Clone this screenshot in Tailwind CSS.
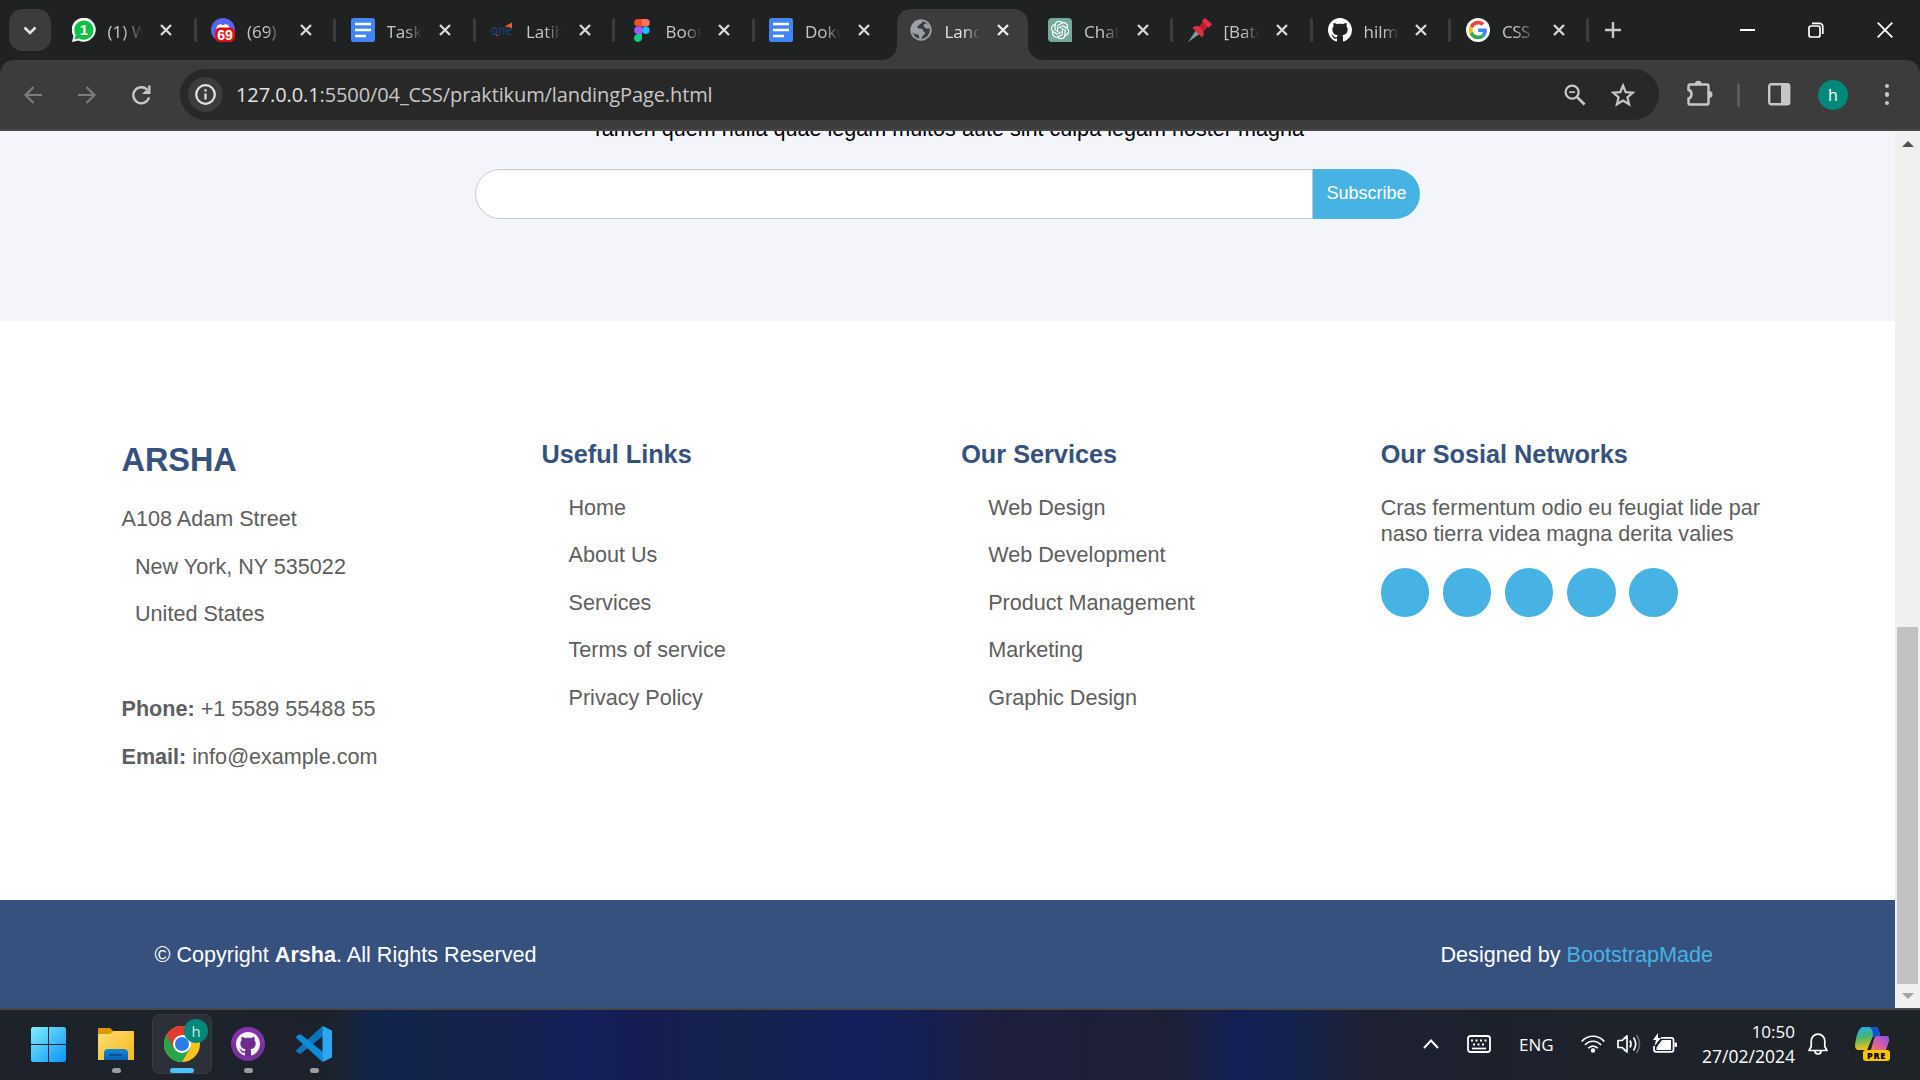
<!DOCTYPE html>
<html lang="en">
<head>
<meta charset="utf-8">
<title>Landing Page</title>
<script src="https://cdn.jsdelivr.net/npm/@tailwindcss/browser@4"></script>
</head>
<body class="w-[1920px] h-[1080px] overflow-hidden bg-[#202221] font-['Open_Sans',sans-serif]">
<svg class="hidden">
  <symbol id="x" viewBox="0 0 12 12"><path d="M1 1l10 10M11 1L1 11" stroke="currentColor" stroke-width="2.3" fill="none"/></symbol>
  <symbol id="doc" viewBox="0 0 24 24"><rect width="24" height="24" rx="2.5" fill="#4285f4"/><path d="M4 6h16M4 12h16M4 18h11" stroke="#fff" stroke-width="2.4"/></symbol>
  <symbol id="gh" viewBox="0 0 16 16"><path fill="currentColor" d="M8 0C3.58 0 0 3.58 0 8c0 3.54 2.29 6.53 5.47 7.59.4.07.55-.17.55-.38 0-.19-.01-.82-.01-1.49-2.01.37-2.53-.49-2.69-.94-.09-.23-.48-.94-.82-1.13-.28-.15-.68-.52-.01-.53.63-.01 1.08.58 1.23.82.72 1.21 1.87.87 2.33.66.07-.52.28-.87.51-1.07-1.78-.2-3.64-.89-3.64-3.95 0-.87.31-1.59.82-2.15-.08-.2-.36-1.02.08-2.12 0 0 .67-.21 2.2.82.64-.18 1.32-.27 2-.27s1.36.09 2 .27c1.53-1.04 2.2-.82 2.2-.82.44 1.1.16 1.92.08 2.12.51.56.82 1.27.82 2.15 0 3.07-1.87 3.75-3.65 3.95.29.25.54.73.54 1.48 0 1.07-.01 1.93-.01 2.2 0 .21.15.46.55.38A8.01 8.01 0 0 0 16 8c0-4.42-3.58-8-8-8z"/></symbol>
</svg>
<div class="flex flex-col h-full">
  <!-- tab strip -->
  <div class="flex h-[60px] items-center shrink-0 text-[17px] leading-6 text-[#c7c7c7]">
    <div class="ml-[9px] mr-[3px] size-[42px] rounded-[14px] bg-[#3c3c3c] flex items-center justify-center shrink-0">
      <svg class="w-[14px] h-[9px]" viewBox="0 0 14 9"><path d="M1.5 1.5L7 7l5.500-5.500" stroke="#e3e3e3" stroke-width="2.6" fill="none"/></svg>
    </div>
    <div class="flex items-center w-[139.5px] shrink-0">
      <svg class="ml-[17.500px] size-6 shrink-0" viewBox="0 0 24 24"><path d="M0 24l1.500-6A12 12 0 1 1 6.500 22.500z" fill="#fff"/><path d="M2.300 21.500l1.300-4.500A9.600 9.600 0 1 1 7 20.400z" fill="#0fc143"/><text x="12" y="17" text-anchor="middle" font-family="Liberation Sans" font-weight="700" font-size="15" fill="#fff">1</text></svg>
      <span class="ml-3 mt-[3px] w-[35px] overflow-hidden whitespace-nowrap [mask-image:linear-gradient(90deg,#000_45%,transparent)]">(1) WhatsApp</span>
      <svg class="ml-[17.500px] size-3 text-[#dadada]"><use href="#x"/></svg>
    </div>
    <div class="flex items-center w-[139.5px] shrink-0"><i class="w-[3px] h-6 rounded bg-[#3c3c3c]"></i>
      <svg class="ml-[14.500px] size-6 shrink-0" viewBox="0 0 24 24"><circle cx="12" cy="12" r="12" fill="#5865f2"/><path d="M5 13c0-3 1-5 2-6l3-1 1 1h2l1-1 3 1c1 1 2 3 2 6z" fill="#fff"/><rect x="4" y="9.500" width="20" height="14.500" rx="5" fill="#e0120f"/><text x="14" y="21.700" text-anchor="middle" font-family="Liberation Sans" font-weight="700" font-size="14" fill="#fff">69</text></svg>
      <span class="ml-3 mt-[3px] w-[35px] overflow-hidden whitespace-nowrap [mask-image:linear-gradient(90deg,#000_55%,transparent)]">(69)</span>
      <svg class="ml-[17.500px] size-3 text-[#dadada]"><use href="#x"/></svg>
    </div>
    <div class="flex items-center w-[139.5px] shrink-0"><i class="w-[3px] h-6 rounded bg-[#3c3c3c]"></i>
      <svg class="ml-[14.500px] size-6 shrink-0"><use href="#doc"/></svg>
      <span class="ml-3 mt-[3px] w-[35px] overflow-hidden whitespace-nowrap [mask-image:linear-gradient(90deg,#000_55%,transparent)]">Task</span>
      <svg class="ml-[17.500px] size-3 text-[#dadada]"><use href="#x"/></svg>
    </div>
    <div class="flex items-center w-[139.5px] shrink-0"><i class="w-[3px] h-6 rounded bg-[#3c3c3c]"></i>
      <svg class="ml-[14.500px] size-6 shrink-0" viewBox="0 0 24 24"><text x="1" y="17" font-family="Open Sans" font-weight="600" font-size="13.500" textLength="21" lengthAdjust="spacingAndGlyphs" fill="#1c3d77">one</text><path d="M14.500 8.500l7.500-4v6l-2.500-1.500z" fill="#e8622c"/><circle cx="7" cy="17.500" r=".8" fill="#e8622c"/></svg>
      <span class="ml-3 mt-[3px] w-[35px] overflow-hidden whitespace-nowrap [mask-image:linear-gradient(90deg,#000_55%,transparent)]">Latihan</span>
      <svg class="ml-[17.500px] size-3 text-[#dadada]"><use href="#x"/></svg>
    </div>
    <div class="flex items-center w-[139.5px] shrink-0"><i class="w-[3px] h-6 rounded bg-[#3c3c3c]"></i>
      <svg class="ml-[14.500px] size-6 shrink-0" viewBox="0 0 24 24"><path d="M12 1H8a3.700 3.700 0 0 0 0 7.500h4z" fill="#f24e1e"/><path d="M12 1h4a3.700 3.700 0 0 1 0 7.500h-4z" fill="#ff7262"/><path d="M12 8.500H8A3.700 3.700 0 0 0 8 16h4z" fill="#a259ff"/><circle cx="15.800" cy="12.300" r="3.800" fill="#1abcfe"/><path d="M12 16H8.200a4 4 0 1 0 3.800 4z" fill="#0acf83"/></svg>
      <span class="ml-3 mt-[3px] w-[35px] overflow-hidden whitespace-nowrap [mask-image:linear-gradient(90deg,#000_55%,transparent)]">Bootstrap</span>
      <svg class="ml-[17.500px] size-3 text-[#dadada]"><use href="#x"/></svg>
    </div>
    <div class="flex items-center w-[139.5px] shrink-0"><i class="w-[3px] h-6 rounded bg-[#3c3c3c]"></i>
      <svg class="ml-[14.500px] size-6 shrink-0"><use href="#doc"/></svg>
      <span class="ml-3 mt-[3px] w-[35px] overflow-hidden whitespace-nowrap [mask-image:linear-gradient(90deg,#000_55%,transparent)]">Dokumen</span>
      <svg class="ml-[17.500px] size-3 text-[#dadada]"><use href="#x"/></svg>
    </div>
    <div class="relative flex items-center w-[139.5px] h-[60px] shrink-0 text-[#e3e3e3]">
      <svg class="absolute left-[-9px] top-[9px] w-[162px] h-[51px]" viewBox="0 0 162 51"><path d="M0 51a15 15 0 0 0 15-15V14A14 14 0 0 1 29 0h103a14 14 0 0 1 14 14v22a15 15 0 0 0 15 15z" fill="#3c3c3c"/></svg>
      <svg class="relative ml-[17.500px] size-6 shrink-0" viewBox="0 0 24 24"><circle cx="12" cy="12" r="9.800" fill="none" stroke="#9aa0a6" stroke-width="1.800"/><path d="M2.500 11.500C3 6 7 2.200 13.500 2.500c.5 2-1 3.500-3 3.800-.5 1.500-1 2-2.300 2.200-.2 1.500.8 2 2.500 2 2.800.2 3.600 1.500 3.800 3 1.500.3 2 1.500 1 2.800l-2.500 2.500c-.2 1.400-.8 2.300-2.200 2.800-1-1.600-.2-3.600-1.600-5.200C7 16.500 3 16 2.500 11.500zM16 5.500c2.500 0 4 1.500 5 4.500-1.500 1.300-3.800.8-4.800-.4-1.700-.2-2.200-3.200-.2-4.100z" fill="#9aa0a6"/></svg>
      <span class="relative ml-3 mt-[3px] w-[35px] overflow-hidden whitespace-nowrap [mask-image:linear-gradient(90deg,#000_55%,transparent)]">Landing</span>
      <svg class="relative ml-[17.500px] size-3 text-[#eee]"><use href="#x"/></svg>
    </div>
    <div class="flex items-center w-[139.5px] shrink-0">
      <svg class="ml-[17.500px] size-6 shrink-0" viewBox="0 0 24 24"><path d="M4 0h16a4 4 0 0 1 4 4v20H4a4 4 0 0 1-4-4V4a4 4 0 0 1 4-4z" fill="#74aa9c"/><path transform="translate(2.800 2.700) scale(.77)" fill="#fff" d="M22.2819 9.8211a5.9847 5.9847 0 0 0-.5157-4.9108 6.0462 6.0462 0 0 0-6.5098-2.9A6.0651 6.0651 0 0 0 4.9807 4.1818a5.9847 5.9847 0 0 0-3.9977 2.9 6.0462 6.0462 0 0 0 .7427 7.0966 5.98 5.98 0 0 0 .511 4.9107 6.051 6.051 0 0 0 6.5146 2.9001A5.9847 5.9847 0 0 0 13.2599 24a6.0557 6.0557 0 0 0 5.7718-4.2058 5.9894 5.9894 0 0 0 3.9977-2.9001 6.0557 6.0557 0 0 0-.7475-7.0729zm-9.022 12.6081a4.4755 4.4755 0 0 1-2.8764-1.0408l.1419-.0804 4.7783-2.7582a.7948.7948 0 0 0 .3927-.6813v-6.7369l2.02 1.1686a.071.071 0 0 1 .038.052v5.5826a4.504 4.504 0 0 1-4.4945 4.4944zm-9.6607-4.1254a4.4708 4.4708 0 0 1-.5346-3.0137l.142.0852 4.783 2.7582a.7712.7712 0 0 0 .7806 0l5.8428-3.3685v2.3324a.0804.0804 0 0 1-.0332.0615L9.74 19.9502a4.4992 4.4992 0 0 1-6.1408-1.6464zM2.3408 7.8956a4.485 4.485 0 0 1 2.3655-1.9728V11.6a.7664.7664 0 0 0 .3879.6765l5.8144 3.3543-2.0201 1.1685a.0757.0757 0 0 1-.071 0l-4.8303-2.7865A4.504 4.504 0 0 1 2.3408 7.872zm16.5963 3.8558L13.1038 8.364 15.1192 7.2a.0757.0757 0 0 1 .071 0l4.8303 2.7913a4.4944 4.4944 0 0 1-.6765 8.1042v-5.6772a.79.79 0 0 0-.407-.667zm2.0107-3.0231l-.142-.0852-4.7735-2.7818a.7759.7759 0 0 0-.7854 0L9.409 9.2297V6.8974a.0662.0662 0 0 1 .0284-.0615l4.8303-2.7866a4.4992 4.4992 0 0 1 6.6802 4.66zM8.3065 12.863l-2.02-1.1638a.0804.0804 0 0 1-.038-.0567V6.0742a4.4992 4.4992 0 0 1 7.3757-3.4537l-.142.0805L8.704 5.459a.7948.7948 0 0 0-.3927.6813zm1.0976-2.3654l2.602-1.4998 2.6069 1.4998v2.9994l-2.5974 1.4997-2.6067-1.4997Z"/></svg>
      <span class="ml-3 mt-[3px] w-[35px] overflow-hidden whitespace-nowrap [mask-image:linear-gradient(90deg,#000_55%,transparent)]">ChatGPT</span>
      <svg class="ml-[17.500px] size-3 text-[#dadada]"><use href="#x"/></svg>
    </div>
    <div class="flex items-center w-[139.5px] shrink-0"><i class="w-[3px] h-6 rounded bg-[#3c3c3c]"></i>
      <svg class="ml-[14.500px] size-6 shrink-0" viewBox="0 0 24 24"><path d="M0 24L8 12.500l3.500 3.500z" fill="#8899a6"/><path d="M4.500 10c2-2 4.500-2.500 6.500-1.500l4-4L14 2.500 17 0l7 6-2.500 3.500-2.500-.5-3.500 4.500c.8 2.500 0 4.500-1.500 6z" fill="#dd2e44"/><path d="M11 8.500l4-4 4 4.500-3.500 4.500z" fill="#be1931"/></svg>
      <span class="ml-3 mt-[3px] w-[35px] overflow-hidden whitespace-nowrap [mask-image:linear-gradient(90deg,#000_55%,transparent)]">[Batch</span>
      <svg class="ml-[17.500px] size-3 text-[#dadada]"><use href="#x"/></svg>
    </div>
    <div class="flex items-center w-[138.5px] shrink-0"><i class="w-[3px] h-6 rounded bg-[#3c3c3c]"></i>
      <svg class="ml-[15px] size-6 shrink-0 text-white"><use href="#gh"/></svg>
      <span class="ml-3 mt-[3px] w-[35px] overflow-hidden whitespace-nowrap [mask-image:linear-gradient(90deg,#000_55%,transparent)]">hilmi</span>
      <svg class="ml-[16px] size-3 text-[#dadada]"><use href="#x"/></svg>
    </div>
    <div class="flex items-center w-[138px] shrink-0"><i class="w-[3px] h-6 rounded bg-[#3c3c3c]"></i>
      <svg class="ml-[15px] size-6 shrink-0" viewBox="0 0 24 24"><circle cx="12" cy="12" r="12" fill="#fff"/><g transform="translate(2.800 2.800) scale(.385)"><path fill="#EA4335" d="M24 9.500c3.540 0 6.710 1.220 9.210 3.600l6.850-6.850C35.900 2.380 30.470 0 24 0 14.620 0 6.510 5.380 2.560 13.220l7.980 6.190C12.430 13.720 17.740 9.500 24 9.500z"/><path fill="#4285F4" d="M46.980 24.550c0-1.570-.15-3.090-.38-4.550H24v9.020h12.940c-.58 2.960-2.260 5.480-4.780 7.180l7.730 6c4.510-4.180 7.090-10.360 7.090-17.650z"/><path fill="#FBBC05" d="M10.530 28.590c-.48-1.450-.76-2.990-.76-4.590s.27-3.140.76-4.590l-7.980-6.190C.92 16.460 0 20.120 0 24c0 3.880.92 7.540 2.560 10.780l7.970-6.190z"/><path fill="#34A853" d="M24 48c6.480 0 11.930-2.130 15.890-5.810l-7.730-6c-2.150 1.450-4.920 2.300-8.160 2.300-6.260 0-11.570-4.220-13.470-9.910l-7.980 6.190C6.510 42.620 14.620 48 24 48z"/></g></svg>
      <span class="ml-3 mt-[3px] w-[35px] overflow-hidden whitespace-nowrap tracking-[-0.500px] [mask-image:linear-gradient(90deg,#000_35%,transparent)]">CSS</span>
      <svg class="ml-[15.500px] size-3 text-[#dadada]"><use href="#x"/></svg>
    </div>
    <i class="w-[3px] h-6 rounded bg-[#3c3c3c]"></i>
    <svg class="ml-[16px] size-4" viewBox="0 0 16 16"><path d="M8 0v16M0 8h16" stroke="#c7c7c7" stroke-width="2.400"/></svg>
    <div class="ml-auto mr-[27px] flex items-center gap-[53px]">
      <svg class="w-[15px] h-[15px]" viewBox="0 0 15 15"><path d="M0 7h15" stroke="#fff" stroke-width="2"/></svg>
      <svg class="w-[16px] h-[16px]" viewBox="0 0 16 16" fill="none" stroke="#fff" stroke-width="1.700"><rect x="1" y="4" width="11" height="11" rx="2"/><path d="M4 1.300h7.500A3.300 3.300 0 0 1 14.800 4.600V12"/></svg>
      <svg class="w-[16px] h-[16px]" viewBox="0 0 16 16"><path d="M.7.7l14.600 14.600M15.300.7L.7 15.300" stroke="#fff" stroke-width="1.800"/></svg>
    </div>
  </div>

  <!-- toolbar -->
  <div class="flex items-center h-[71px] shrink-0 rounded-t-[14px] bg-[#3c3c3c] border-b-2 border-[#484848]">
    <svg class="ml-[24px] size-[18px]" viewBox="0 0 18 18" fill="none" stroke="#7c7c7c" stroke-width="2.200"><path d="M18 9H1.500M9.500 1L1.500 9l8 8"/></svg>
    <svg class="ml-[36px] size-[18px]" viewBox="0 0 18 18" fill="none" stroke="#7c7c7c" stroke-width="2.200"><path d="M0 9h16.500M8.500 1l8 8-8 8"/></svg>
    <svg class="ml-[35px] size-5" viewBox="0 0 20 20"><path d="M16.800 5.500A8 8 0 1 0 18 12.500" fill="none" stroke="#c7c7c7" stroke-width="2.400"/><path d="M19.500.5V9H11l3-3h3.200V.5z" fill="#c7c7c7"/></svg>
    <div class="ml-[29px] flex items-center w-[1479px] h-[51px] rounded-full bg-[#282828]">
      <div class="ml-2 size-[35px] rounded-full bg-[#3c3c3c] flex items-center justify-center shrink-0">
        <svg class="size-[21px]" viewBox="0 0 21 21"><circle cx="10.500" cy="10.500" r="9.300" fill="none" stroke="#e3e3e3" stroke-width="2.200"/><path d="M10.500 9.500v6M10.500 5.300v2.200" stroke="#e3e3e3" stroke-width="2.200"/></svg>
      </div>
      <span class="ml-[13px] text-[20px] tracking-[-0.100px] text-[#c7c7c7] whitespace-nowrap"><span class="text-[#e3e3e3]">127.0.0.1</span>:5500/04_CSS/praktikum/landingPage.html</span>
      <svg class="ml-auto mr-[25px] size-[22px]" viewBox="0 0 23 23" fill="none" stroke="#c7c7c7"><circle cx="8.500" cy="8.500" r="6.800" stroke-width="2.400"/><path d="M13.500 13.500l8 8" stroke-width="2.800"/><path d="M5.500 8.500h6" stroke-width="1.800"/></svg>
      <svg class="mr-[24px] size-6" viewBox="0 0 24 24"><path d="M12 2.500l2.700 6.600 7.100.6-5.400 4.600 1.700 7L12 17.500l-6.100 3.800 1.700-7L2.200 9.700l7.100-.6z" fill="none" stroke="#c7c7c7" stroke-width="2.200"/></svg>
    </div>
    <svg class="ml-[28px] -mt-[3px] w-[26px] h-[26px]" viewBox="0 0 26 26"><path d="M3 4.500h17a1.500 1.500 0 0 1 1.500 1.500v17a1.500 1.500 0 0 1-1.500 1.500H3A1.500 1.500 0 0 1 1.500 23v-4.500c4-.5 4-8 0-8.500V6A1.500 1.500 0 0 1 3 4.500z" fill="none" stroke="#c7c7c7" stroke-width="2.400"/><path d="M8 4a3.300 3.300 0 0 1 6.600 0zM22 11a3.300 3.300 0 0 1 0 7z" fill="#c7c7c7"/></svg>
    <i class="ml-[24px] w-[3px] h-6 rounded bg-[#5c5c5c]"></i>
    <svg class="ml-[28px] w-[23px] h-[23px]" viewBox="0 0 23 23"><rect x="1.200" y="1.200" width="20" height="20" rx="2" fill="none" stroke="#c7c7c7" stroke-width="2.400"/><path d="M13 1h8v20h-8z" fill="#c7c7c7"/></svg>
    <div class="ml-[27px] size-[30px] rounded-full bg-[#00897b] text-white text-[16px] leading-[30px] text-center">h</div>
    <div class="ml-[36.500px] flex flex-col gap-[4px]"><i class="size-[4.500px] rounded-full bg-[#c7c7c7]"></i><i class="size-[4.500px] rounded-full bg-[#c7c7c7]"></i><i class="size-[4.500px] rounded-full bg-[#c7c7c7]"></i></div>
  </div>

  <!-- viewport -->
  <div class="flex h-[877px] shrink-0 bg-white font-['Liberation_Sans',Arial,sans-serif] text-[21.6px] leading-[26px] text-[#5e5e5e]">
    <div class="flex flex-col w-[1895px]">
      <section class="h-[190px] bg-[#f3f5fa] text-black overflow-hidden flex flex-col items-center">
        <p class="-mt-[15px] whitespace-nowrap">Tamen quem nulla quae legam multos aute sint culpa legam noster magna</p>
        <form class="mt-[27px] flex w-[945px] h-[50px]">
          <div class="flex-1 bg-white border border-[#c9c9c9] rounded-l-[25px]"></div>
          <button type="button" class="w-[107px] bg-[#47b2e4] rounded-r-[25px] text-white text-[18px] leading-[22px] pb-[2px]">Subscribe</button>
        </form>
      </section>
      <footer class="flex h-[579px] pl-[121.500px] pt-[119px]">
        <div class="w-[420px]">
          <h2 class="mt-[2px] text-[32.400px] leading-[36px] font-bold text-[#37517e]">ARSHA</h2>
          <div class="mt-[28px] flex flex-col gap-[21.600px]">
            <p>A108 Adam Street</p><p class="pl-[13.500px]">New York, NY 535022</p><p class="pl-[13.500px]">United States</p>
            <p class="mt-[47.600px]"><b>Phone:</b> +1 5589 55488 55</p><p><b>Email:</b> info@example.com</p>
          </div>
        </div>
        <div class="w-[419.700px]">
          <h3 class="text-[25.270px] leading-[28px] font-bold text-[#37517e]">Useful Links</h3>
          <ul class="mt-[26.600px] pl-[27px] flex flex-col gap-[21.600px]"><li>Home</li><li>About Us</li><li>Services</li><li>Terms of service</li><li>Privacy Policy</li></ul>
        </div>
        <div class="w-[419.500px]">
          <h3 class="text-[25.270px] leading-[28px] font-bold text-[#37517e]">Our Services</h3>
          <ul class="mt-[26.600px] pl-[27px] flex flex-col gap-[21.600px]"><li>Web Design</li><li>Web Development</li><li>Product Management</li><li>Marketing</li><li>Graphic Design</li></ul>
        </div>
        <div class="w-[420px]">
          <h3 class="text-[25.270px] leading-[28px] font-bold text-[#37517e]">Our Sosial Networks</h3>
          <p class="mt-[27px]">Cras fermentum odio eu feugiat lide par<br>naso tierra videa magna derita valies</p>
          <div class="mt-[21px] flex gap-[13.500px]"><i class="size-[48.600px] rounded-full bg-[#47b2e4]"></i><i class="size-[48.600px] rounded-full bg-[#47b2e4]"></i><i class="size-[48.600px] rounded-full bg-[#47b2e4]"></i><i class="size-[48.600px] rounded-full bg-[#47b2e4]"></i><i class="size-[48.600px] rounded-full bg-[#47b2e4]"></i></div>
        </div>
      </footer>
      <div class="flex justify-between items-center h-[108px] bg-[#37517e] text-white pt-[2px] pl-[154.500px] pr-[182px]">
        <p>© Copyright <b>Arsha</b>. All Rights Reserved</p>
        <p>Designed by <span class="text-[#47b2e4]">BootstrapMade</span></p>
      </div>
    </div>
    <div class="flex flex-col items-center justify-between w-[25px] bg-[#f0f0f0] pt-[10px] pb-[9px]">
      <svg class="w-[12px] h-[6px]" viewBox="0 0 12 6"><path d="M0 6l6-6 6 6z" fill="#505050"/></svg>
      <div class="mt-auto mb-[9px] w-[21px] h-[357px] bg-[#c1c1c1]"></div>
      <svg class="w-[12px] h-[6px]" viewBox="0 0 12 6"><path d="M0 0l6 6 6-6z" fill="#a3a3a3"/></svg>
    </div>
  </div>

  <!-- taskbar -->
  <div class="flex items-center h-[72px] pb-[2px] shrink-0 border-t-2 border-[#46474b] text-white text-[17px] bg-[linear-gradient(90deg,#1d222b_0px,#1c222b_330px,#11244a_375px,#15234b_500px,#121f5a_580px,#151d50_650px,#13234c_740px,#121f5c_860px,#141f50_930px,#1e1e3c_1000px,#1c2036_1170px,#121f55_1240px,#13224a_1300px,#1e2032_1370px,#1d212c_1500px,#1e2327_1920px)]">
    <svg class="ml-[31px] size-[35px]" viewBox="0 0 35 35"><defs><linearGradient id="w" gradientUnits="userSpaceOnUse" x1="0" y1="0" x2="35" y2="35"><stop stop-color="#7deffd"/><stop offset="1" stop-color="#0a93f5"/></linearGradient></defs><path d="M1.500 0H17v17H0V1.500zM18 0h15.500L35 1.500V17H18zM0 18h17v17H1.500L0 33.500zM18 18h17v15.500L33.500 35H18z" fill="url(#w)"/></svg>
    <div class="relative ml-[32px] w-9 h-[60px] flex items-center justify-center">
      <svg class="w-9 h-[34px]" viewBox="0 0 36 34"><defs><linearGradient id="f" x2="1" y2="1"><stop stop-color="#ffdc74"/><stop offset="1" stop-color="#f8b916"/></linearGradient><linearGradient id="fb" y2="1" x2="0"><stop stop-color="#1388d8"/><stop offset="1" stop-color="#0a62b5"/></linearGradient></defs><path d="M0 2a1 1 0 0 1 1-1h11l4 3.500H36V10H0z" fill="#dd9803"/><path d="M0 7h11.500L16 4h19a1 1 0 0 1 1 1v28H0z" fill="url(#f)"/><path d="M6 33V26a4 4 0 0 1 4-4h16a4 4 0 0 1 4 4v7z" fill="url(#fb)"/><path d="M11 28h13" stroke="#0a4a92" stroke-width="1.800"/></svg>
      <i class="absolute bottom-[1px] left-[14px] w-[9px] h-[5px] rounded-full bg-[#9b9ca0]"></i>
    </div>
    <div class="relative ml-[18px] size-[60px] rounded-[7px] bg-[#2b3039] border border-[#373b44] flex items-center justify-center">
      <svg class="size-9 mr-[1px]" viewBox="0 0 36 36"><circle cx="18" cy="18" r="18" fill="#fcc31e"/><path d="M18 18L2.400 9A18 18 0 0 0 18 36l8-13.500z" fill="#2ba24c"/><path d="M2.400 9A18 18 0 0 1 33.600 9H18v9l-7.800 4.500z" fill="#e33b2e"/><circle cx="18" cy="18" r="9" fill="#fff"/><circle cx="18" cy="18" r="7" fill="#2b7de9"/></svg>
      <div class="absolute left-[31px] top-[4px] size-6 rounded-full bg-[#00897b] text-[15px] leading-6 text-center text-[#cfe9e6]">h</div>
      <i class="absolute bottom-0 left-[17px] w-6 h-[5px] rounded-full bg-[#4cc2ff]"></i>
    </div>
    <div class="relative ml-[19px] w-[34px] h-[60px] flex items-center">
      <svg class="size-[34px]" viewBox="0 0 34 34"><circle cx="17" cy="17" r="17" fill="#78309b"/><path d="M17 0a17 17 0 0 1 17 17H0A17 17 0 0 1 17 0z" fill="#8a35b2" opacity=".6"/><circle cx="17" cy="17" r="12" fill="#6f2b92"/><g transform="translate(5 5) scale(1.500)" color="#f2f2f2"><use href="#gh" width="16" height="16"/></g></svg>
      <i class="absolute bottom-[1px] left-[13px] w-[9px] h-[5px] rounded-full bg-[#9b9ca0]"></i>
    </div>
    <div class="relative ml-[31px] w-9 h-[60px] flex items-center">
      <svg class="size-9" viewBox="0 0 36 36"><path d="M26.500 0L.8 23.500c-1 1-.9 1.800 0 2.600l2 1.400c1 .5 1.700.4 2.500-.2L27 10z" fill="#0b74bb"/><path d="M26.500 36L.8 12.500c-1-1-.9-1.800 0-2.600l2-1.400c1-.5 1.700-.4 2.500.2L27 26z" fill="#0c8bd6"/><path d="M26.500 0L36 4.500v27L26.500 36z" fill="#28a8f3"/></svg>
      <i class="absolute bottom-[1px] left-[14px] w-[9px] h-[5px] rounded-full bg-[#9b9ca0]"></i>
    </div>
    <svg class="ml-auto w-4 h-[10px]" viewBox="0 0 16 10"><path d="M1 9l7-7.500L15 9" fill="none" stroke="#fff" stroke-width="1.900"/></svg>
    <svg class="ml-[28px] w-6 h-[18px]" viewBox="0 0 24 18" fill="none" stroke="#fff"><rect x="1" y="1" width="22" height="16" rx="2.500" stroke-width="1.800"/><path d="M4 5.500h16M6 9.500h12" stroke-width="2" stroke-dasharray="2 2.500"/><path d="M5 13.500h14" stroke-width="1.700"/></svg>
    <span class="ml-[28px] w-[35px] pt-[2px]">ENG</span>
    <svg class="ml-[27px] w-6 h-[18px]" viewBox="0 0 24 18" fill="none" stroke="#fff" stroke-width="1.700"><path d="M.7 6.500c6-7 16.600-7 22.600 0M4 10c4.500-5 11.500-5 16 0M7.300 13.300c2.500-3 6.900-3 9.400 0"/><circle cx="12" cy="15.500" r="2.200" fill="#fff" stroke="none"/></svg>
    <svg class="ml-3 w-6 h-5" viewBox="0 0 24 20" fill="none" stroke="#fff" stroke-width="1.700"><path d="M1 6.500h4L10 2v16l-5-4.500H1z" stroke-linejoin="round"/><path d="M13 6.500q2 3.500 0 7M16.500 3.500q4.500 6.500 0 13"/><path d="M19.500 1q6 9 0 18" stroke="#666b73"/></svg>
    <svg class="ml-3 mb-[3px] w-6 h-5" viewBox="0 0 24 20"><path d="M8 4.800h10.500a2 2 0 0 1 2 2v10a2 2 0 0 1-2 2H3a2 2 0 0 1-2-2V13" fill="none" stroke="#fff" stroke-width="1.700"/><path d="M9 7h9v10H3.500v-2.500zM21.500 9.500h1.500a1 1 0 0 1 1 1V13a1 1 0 0 1-1 1h-1.500zM5 0L0 7h3l-1.500 6L8 5H5z" fill="#fff"/></svg>
    <div class="ml-[22px] w-[96px] text-right leading-6 whitespace-nowrap"><p>10:50</p><p class="text-[17.500px]">27/02/2024</p></div>
    <svg class="ml-[13px] w-5 h-[22px]" viewBox="0 0 20 22" fill="none" stroke="#fff" stroke-width="1.700"><path d="M1 17.500l2.200-4V8a6.800 6.800 0 0 1 13.600 0v5.500l2.200 4z" stroke-linejoin="round"/><path d="M7 18a3 3 0 0 0 6 0"/></svg>
    <div class="relative ml-[27px] mr-[31px] size-[34px]">
      <svg class="size-[34px]" viewBox="0 0 34 34"><defs><linearGradient id="c1" x2=".2" y2="1"><stop stop-color="#1fb0f5"/><stop offset=".5" stop-color="#4bb56d"/><stop offset="1" stop-color="#f0c419"/></linearGradient><linearGradient id="c2" x1="1" x2=".2" y2="1"><stop stop-color="#8a4df0"/><stop offset=".6" stop-color="#e0609f"/><stop offset="1" stop-color="#f77a57"/></linearGradient></defs><path d="M7 0h13c3 0 4 3 5 8l-7 1-6 14H4c-3 0-4-2-4-5C1 12 2 3 7 0z" fill="url(#c1)"/><path d="M14 0h6c3 0 4 3 5 9-4-1-6 0-7 3C18 6 18 2 14 0z" fill="#1350d8"/><path d="M21 9h10c3 0 4 2 3 5l-3 9c-1 2-3 3-5 3H14c3-2 4-15 7-17z" fill="url(#c2)"/></svg>
      <span class="absolute left-[8px] top-[23px] w-[27px] h-[11px] rounded-[3px] bg-[#fdc500] text-black text-[9px] leading-[11px] font-extrabold tracking-[0.800px] text-center">PRE</span>
    </div>
  </div>
</div>
</body>
</html>
